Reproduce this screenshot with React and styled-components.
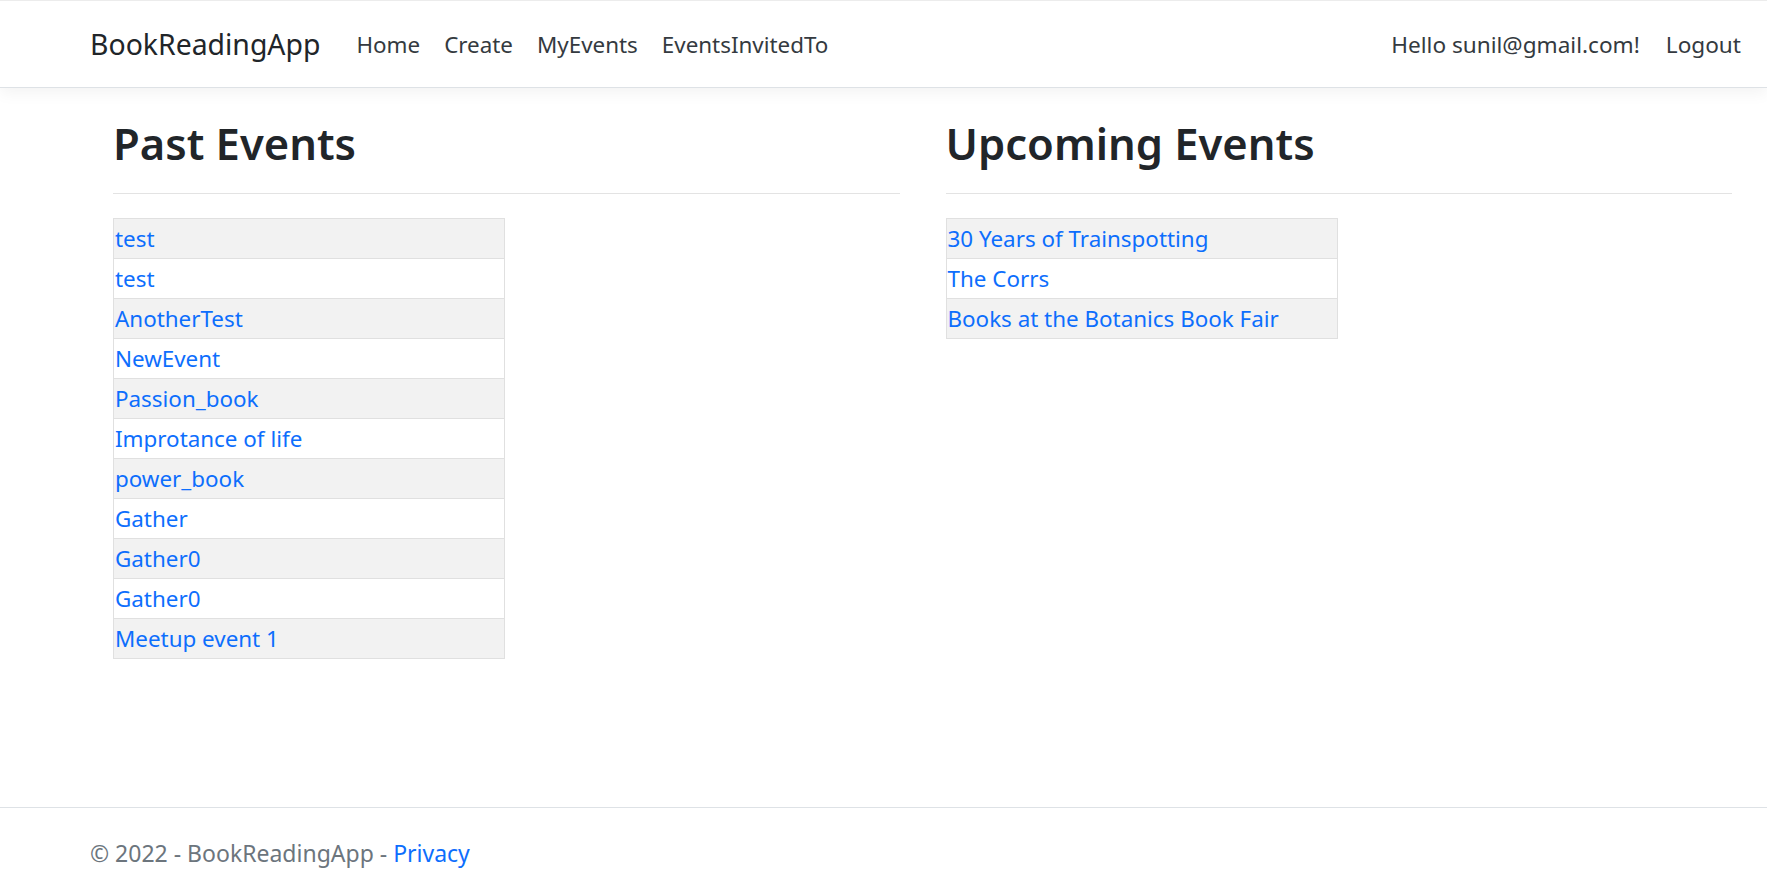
import styled, { createGlobalStyle } from "styled-components";

const GlobalStyle = createGlobalStyle`
    html, body {
        margin: 0;
        padding: 0;
    }
    body {
        font-family: "Noto Sans", "Open Sans", sans-serif;
        color: #212529;
        background: #fff;
    }
`

const Page = styled.div`
    min-height: 100vh;
    display: flex;
    flex-direction: column;
`

const Header = styled.header`
    height: 86px;
    border-top: 1px solid #ececec;
    border-bottom: 1px solid #dee2e6;
    box-shadow: 0 5px 15px rgba(0, 0, 0, 0.05);
    background: #fff;
    display: flex;
    align-items: center;
    padding: 0 26px 0 90px;
`

const Brand = styled.a`
    font-size: 28.4px;
    color: #212529;
    text-decoration: none;
    margin-right: 24px;
`

const NavList = styled.nav`
    display: flex;
    align-items: center;
    flex: 1;
`

const NavLink = styled.a`
    font-size: 22.4px;
    color: #343a40;
    text-decoration: none;
    padding: 8px 12px;
`

const UserArea = styled.div`
    display: flex;
    align-items: center;
    gap: 26px;
    font-size: 22.6px;
    color: #343a40;
`

const Main = styled.main`
    flex: 1;
    display: grid;
    grid-template-columns: 1fr 1fr;
    column-gap: 46px;
    padding: 0 35px 0 113px;
    align-items: start;
`

const Column = styled.section``

const Title = styled.h1`
    font-size: 43.5px;
    font-weight: 600;
    line-height: 1.2;
    margin: 29px 0 0;
`

const Divider = styled.hr`
    border: 0;
    border-top: 1px solid #e3e3e3;
    margin: 24px 0 24px;
`

const EventTable = styled.table`
    border-collapse: collapse;
    width: 392px;
`

const Row = styled.tr`
    background: ${p => (p.$striped ? "#f2f2f2" : "#fff")};
`

const Cell = styled.td`
    border: 1px solid #e0e0e0;
    height: 39px;
    padding: 0 1px;
    font-size: 22.4px;
`

const Link = styled.a`
    color: #0d6efd;
    text-decoration: none;
`

const Footer = styled.footer`
    border-top: 1px solid #dee2e6;
    height: 79px;
    padding-left: 90px;
    display: flex;
    align-items: center;
    padding-top: 12px;
    box-sizing: border-box;
    font-size: 23px;
    color: #6c757d;
`

const pastEvents = [
    "test",
    "test",
    "AnotherTest",
    "NewEvent",
    "Passion_book",
    "Improtance of life",
    "power_book",
    "Gather",
    "Gather0",
    "Gather0",
    "Meetup event 1",
]

const upcomingEvents = [
    "30 Years of Trainspotting",
    "The Corrs",
    "Books at the Botanics Book Fair",
]

function EventList({ title, events }) {
    return (
        <Column>
            <Title>{title}</Title>
            <Divider />
            <EventTable>
                <tbody>
                    {events.map((name, i) => (
                        <Row key={i} $striped={i % 2 === 0}>
                            <Cell><Link href="#">{name}</Link></Cell>
                        </Row>
                    ))}
                </tbody>
            </EventTable>
        </Column>
    )
}

export default function App() {
    return (
        <Page>
            <GlobalStyle />
            <Header>
                <Brand href="#">BookReadingApp</Brand>
                <NavList>
                    <NavLink href="#">Home</NavLink>
                    <NavLink href="#">Create</NavLink>
                    <NavLink href="#">MyEvents</NavLink>
                    <NavLink href="#">EventsInvitedTo</NavLink>
                </NavList>
                <UserArea>
                    <span>Hello sunil@gmail.com!</span>
                    <span>Logout</span>
                </UserArea>
            </Header>
            <Main>
                <EventList title="Past Events" events={pastEvents} />
                <EventList title="Upcoming Events" events={upcomingEvents} />
            </Main>
            <Footer>
                <span>&copy; 2022 - BookReadingApp - <Link href="#">Privacy</Link></span>
            </Footer>
        </Page>
    )
}
